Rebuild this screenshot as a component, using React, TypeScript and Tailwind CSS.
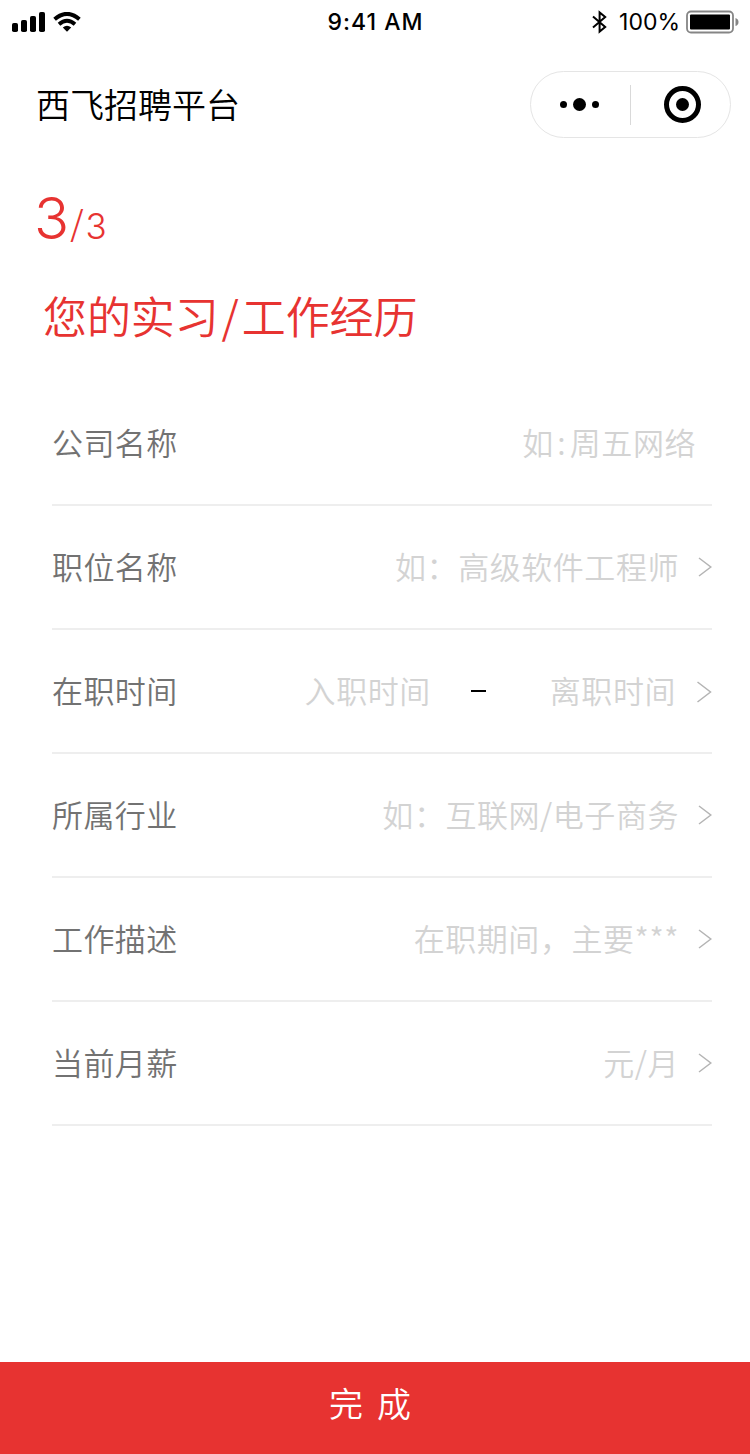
import type { ReactNode } from 'react';

const cjk = "font-['Noto_Sans_CJK_SC',sans-serif]";

function StatusBar() {
  return (
    <div className="flex h-[43px] items-center justify-between pl-3 pr-[11px] font-['Inter',sans-serif] text-black">
      <div className="flex w-[250px] items-center gap-2">
        <svg width="34" height="20" viewBox="0 0 34 20">
          <rect x="0" y="11" width="6" height="9" rx="1.8" />
          <rect x="9" y="8" width="6" height="12" rx="1.8" />
          <rect x="18" y="4" width="6" height="16" rx="1.8" />
          <rect x="27" y="0" width="6" height="20" rx="1.8" />
        </svg>
        <svg width="28" height="20" viewBox="0 0 28 20" className="-ml-px">
          <path d="M1.6 7.2 Q14 -3.4 26.4 7.2" fill="none" stroke="#000" strokeWidth="4" />
          <path d="M6 12.2 Q14 5.2 22 12.2" fill="none" stroke="#000" strokeWidth="3.8" />
          <path d="M9.8 15.6 Q14 12 18.2 15.6 L14 19.8 Z" />
        </svg>
      </div>
      <div className="pt-[2px] text-[23px] font-medium leading-none tracking-[1px]">9:41 AM</div>
      <div className="flex w-[250px] items-center justify-end">
        <svg width="15" height="24" viewBox="0 0 15 24" className="mr-[12px]">
          <path d="M1 6.5 L13.2 17 L7.6 21.6 V2.4 L13.2 7 L1 17.5" fill="none" stroke="#000" strokeWidth="2" />
        </svg>
        <span className="mr-[6px] pt-[2px] text-[23px] leading-none">100%</span>
        <svg width="53" height="24" viewBox="0 0 53 24">
          <rect x="1" y="1.5" width="46" height="21" rx="4" fill="none" stroke="#858585" strokeWidth="1.8" />
          <rect x="4" y="4.5" width="40" height="15" rx="1" />
          <path d="M49.5 8 Q52.5 9 52.5 12 Q52.5 15 49.5 16 Z" fill="#858585" />
        </svg>
      </div>
    </div>
  );
}

function Capsule() {
  return (
    <div className="flex h-[67px] w-[201px] items-center rounded-full border border-[#e5e5e5]">
      <div className="flex w-[99px] items-center justify-center gap-[6px] pr-[2px]">
        <i className="size-[7px] rounded-full bg-black" />
        <i className="size-[13px] rounded-full bg-black" />
        <i className="size-[7px] rounded-full bg-black" />
      </div>
      <div className="h-10 w-px bg-[#d9d9d9]" />
      <div className="flex flex-1 items-center justify-center pl-1">
        <div className="flex size-[37px] items-center justify-center rounded-full border-[5px] border-black">
          <i className="size-[13px] rounded-full bg-black" />
        </div>
      </div>
    </div>
  );
}

function Chevron({ large = false }: { large?: boolean }) {
  return large ? (
    <svg width="16" height="22" viewBox="0 0 16 22" className="ml-[20px] mt-[2px]">
      <path d="M1.5 1 L14.5 11 L1.5 21" fill="none" stroke="#b4b4b4" strokeWidth="1.5" />
    </svg>
  ) : (
    <svg width="14" height="20" viewBox="0 0 14 20" className="ml-[19px]">
      <path d="M1 1 L12.8 10 L1 19" fill="none" stroke="#b4b4b4" strokeWidth="1.5" />
    </svg>
  );
}

function Row({ label, children }: { label: string; children: ReactNode }) {
  return (
    <div className="flex h-[124px] items-center justify-between border-b-2 border-[#eeeeee] text-[31px] font-[350] leading-none tracking-[0.4px]">
      <span className="pb-1 text-[#727272]">{label}</span>
      <div className="flex items-center tracking-[0.55px] text-[#d3d3d3]">{children}</div>
    </div>
  );
}

export default function App() {
  return (
    <div className={`flex h-[1454px] w-[750px] flex-col bg-white ${cjk}`}>
      <StatusBar />
      <header className="mt-7 flex h-[67px] items-center justify-between pl-9 pr-[19px]">
        <h1 className="pb-[2px] text-[34px] font-[350] leading-none text-black">西飞招聘平台</h1>
        <Capsule />
      </header>
      <div className="mt-[45px] flex h-[70px] items-baseline pl-[34px] font-['Inter',sans-serif] leading-[70px] text-[#e73331]">
        <span className="text-[58px] font-light">3</span>
        <span className="ml-px mr-[2px] -translate-y-[3px] font-['Noto_Sans_CJK_SC',sans-serif] text-[34px] font-[350] leading-none">
          /
        </span>
        <span className="text-[35px] font-light">3</span>
      </div>
      <h2 className="mt-[40px] h-[44px] pl-[43px] text-[44px] font-[350] leading-[44px] tracking-[-0.1px] text-[#e73331]">
        您的实习<span className="px-[3px]">/</span>工作经历
      </h2>
      <main className="mx-auto mt-[45px] w-[660px] translate-x-[7px]">
        <Row label="公司名称">
          <span className="pb-1 pr-4">
            如<span className="inline-block w-[16px] text-center">:</span>周五网络
          </span>
        </Row>
        <Row label="职位名称">
          <span className="pb-1">如：高级软件工程师</span>
          <Chevron />
        </Row>
        <Row label="在职时间">
          <span className="pb-1">入职时间</span>
          <i className="ml-[40px] mr-[64px] h-[2px] w-[15px] bg-black" />
          <span className="pb-1">离职时间</span>
          <Chevron large />
        </Row>
        <Row label="所属行业">
          <span className="pb-1">如：互联网/电子商务</span>
          <Chevron />
        </Row>
        <Row label="工作描述">
          <span className="pb-1">在职期间，主要***</span>
          <Chevron />
        </Row>
        <Row label="当前月薪">
          <span className="pb-1">元/月</span>
          <Chevron />
        </Row>
      </main>
      <button className="mt-auto flex h-[92px] items-center justify-center bg-[#e73331] pb-[10px] pr-[10px] text-[34px] font-[350] leading-none text-white">
        <span className="mr-[14px]">完</span>
        <span>成</span>
      </button>
    </div>
  );
}
